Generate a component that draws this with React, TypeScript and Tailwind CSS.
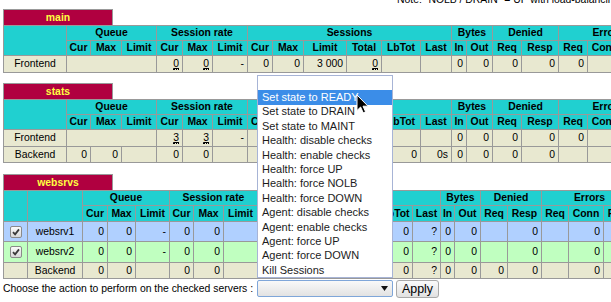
import React from "react";

const BG_FE = "bg-[#e8e8d0]";
const BG_BK = "bg-[#b0d0ff]";
const BG_UP = "bg-[#c0ffc0]";

function Th({ children, span = "" }: { children?: React.ReactNode; span?: string }) {
  return (
    <div className={`flex items-center justify-center overflow-hidden whitespace-nowrap bg-[#20d0d0] font-bold ${span}`}>
      {children}
    </div>
  );
}

function Td({
  children,
  bg,
  center = false,
  span = "",
}: {
  children?: React.ReactNode;
  bg: string;
  center?: boolean;
  span?: string;
}) {
  return (
    <div
      className={`flex items-center overflow-hidden whitespace-nowrap ${
        center ? "justify-center" : "justify-end pr-[3px]"
      } ${bg} ${span}`}
    >
      {children}
    </div>
  );
}

function U({ children }: { children: React.ReactNode }) {
  return (
    <span className="border-b border-dotted border-black leading-[11px] underline decoration-1 underline-offset-[1px]">
      {children}
    </span>
  );
}

function Title({ children }: { children: React.ReactNode }) {
  return (
    <div className="ml-[3px] flex h-[16px] w-[110px] items-center justify-center border border-b-0 border-[#999] bg-[#b00040] font-bold text-[#ffff40]">
      {children}
    </div>
  );
}

function Check() {
  return (
    <div className="flex h-[12px] w-[12px] items-center justify-center rounded-[2px] border border-[#8a8a8a] bg-gradient-to-b from-[#fbfbfb] to-[#d8d8d8]">
      <svg width="10" height="10" viewBox="0 0 10 10">
        <path d="M2 5.2 L4.1 7.4 L8 2.4" fill="none" stroke="#3a3a3a" strokeWidth="1.8" />
      </svg>
    </div>
  );
}

function HeaderRow2() {
  const labels = ["Cur", "Max", "Limit", "Cur", "Max", "Limit", "Cur", "Max", "Limit", "Total", "LbTot", "Last", "In", "Out", "Req", "Resp", "Req", "Conn", "Resp", "Retr", "Redis"];
  return (
    <>
      {labels.map((l, i) => (
        <Th key={i}>{l}</Th>
      ))}
    </>
  );
}

function Vals({ vals, bg }: { vals: React.ReactNode[]; bg: string }) {
  return (
    <>
      {vals.map((v, i) => (
        <Td key={i} bg={bg}>
          {v}
        </Td>
      ))}
    </>
  );
}

const menuItems = [
  "",
  "Set state to READY",
  "Set state to DRAIN",
  "Set state to MAINT",
  "Health: disable checks",
  "Health: enable checks",
  "Health: force UP",
  "Health: force NOLB",
  "Health: force DOWN",
  "Agent: disable checks",
  "Agent: enable checks",
  "Agent: force UP",
  "Agent: force DOWN",
  "Kill Sessions",
];

export default function App() {
  return (
    <div className="relative h-[302px] w-[611px] overflow-hidden bg-white font-['Liberation_Sans',Arial,sans-serif] text-[10.4px] leading-[12px] text-black">
      {/* note */}
      <div className="h-[9px] overflow-hidden">
        <div className="ml-[397px] -mt-[6px] whitespace-nowrap leading-[12px]">
          Note: "NOLB / DRAIN" = UP with load-balancing disabled.
        </div>
      </div>

      {/* main */}
      <Title>main</Title>
      <div className="ml-[3px] grid w-max grid-cols-[62px_23px_30px_34px_25px_29px_34px_24px_30px_42px_34px_38px_30px_14px_25px_28px_36px_28px_34px_34px_30px_30px] grid-rows-[14px_14px_16px] gap-px bg-[#999] p-px">
        <Th span="row-span-2" />
        <Th span="col-span-3">Queue</Th>
        <Th span="col-span-3">Session rate</Th>
        <Th span="col-span-6">Sessions</Th>
        <Th span="col-span-2">Bytes</Th>
        <Th span="col-span-2">Denied</Th>
        <Th span="col-span-3">Errors</Th>
        <Th span="col-span-2">Warnings</Th>
        <HeaderRow2 />
        <Td bg={BG_FE} center>
          Frontend
        </Td>
        <Td bg={BG_FE} span="col-span-3" />
        <Vals
          bg={BG_FE}
          vals={[<U>0</U>, <U>0</U>, "-", "0", "0", "3 000", <U>0</U>, "", "", "0", "0", "0", "0", "0", "", "", "", ""]}
        />
      </div>

      {/* stats */}
      <div className="mt-[10px]">
        <Title>stats</Title>
      </div>
      <div className="ml-[3px] grid w-max grid-cols-[62px_23px_30px_34px_25px_29px_34px_24px_30px_42px_34px_38px_30px_14px_25px_28px_36px_28px_34px_34px_30px_30px] grid-rows-[14px_14px_16px_15px] gap-px bg-[#999] p-px">
        <Th span="row-span-2" />
        <Th span="col-span-3">Queue</Th>
        <Th span="col-span-3">Session rate</Th>
        <Th span="col-span-6">Sessions</Th>
        <Th span="col-span-2">Bytes</Th>
        <Th span="col-span-2">Denied</Th>
        <Th span="col-span-3">Errors</Th>
        <Th span="col-span-2">Warnings</Th>
        <HeaderRow2 />
        <Td bg={BG_FE} center>
          Frontend
        </Td>
        <Td bg={BG_FE} span="col-span-3" />
        <Vals
          bg={BG_FE}
          vals={[<U>3</U>, <U>3</U>, "-", "1", "1", "3 000", <U>3</U>, "", "", "0", "0", "0", "0", "0", "", "", "", ""]}
        />
        <Td bg={BG_FE} center>
          Backend
        </Td>
        <Vals
          bg={BG_FE}
          vals={["0", "0", "", "0", "0", "", "0", "0", "300", "0", "0", "0s", "0", "0", "0", "0", "", "0", "0", "0", "0"]}
        />
      </div>

      {/* websrvs */}
      <div className="mt-[11px]">
        <Title>websrvs</Title>
      </div>
      <div className="ml-[3px] grid w-max grid-cols-[23px_54px_24px_27px_33px_23px_29px_33px_24px_27px_33px_33px_33px_27px_13px_25px_26px_33px_26px_34px_33px_30px_30px] grid-rows-[14px_15px_19px_20px_15px] gap-px bg-[#999] p-px">
        <Th span="row-span-2" />
        <Th span="row-span-2" />
        <Th span="col-span-3">Queue</Th>
        <Th span="col-span-3">Session rate</Th>
        <Th span="col-span-6">Sessions</Th>
        <Th span="col-span-2">Bytes</Th>
        <Th span="col-span-2">Denied</Th>
        <Th span="col-span-3">Errors</Th>
        <Th span="col-span-2">Warnings</Th>
        <HeaderRow2 />

        <Td bg={BG_BK} center>
          <Check />
        </Td>
        <Td bg={BG_BK} center>
          websrv1
        </Td>
        <Vals
          bg={BG_BK}
          vals={["0", "0", "-", "0", "0", "", "0", "0", "-", "0", "0", "?", "0", "0", "", "0", "", "0", "0", "0", "0"]}
        />

        <Td bg={BG_UP} center>
          <Check />
        </Td>
        <Td bg={BG_UP} center>
          websrv2
        </Td>
        <Vals
          bg={BG_UP}
          vals={["0", "0", "-", "0", "0", "", "0", "0", "-", "0", "0", "?", "0", "0", "", "0", "", "0", "0", "0", "0"]}
        />

        <Td bg={BG_FE} />
        <Td bg={BG_FE} center>
          Backend
        </Td>
        <Vals
          bg={BG_FE}
          vals={["0", "0", "", "0", "0", "", "0", "0", "300", "0", "0", "?", "0", "0", "0", "0", "", "0", "0", "0", "0"]}
        />
      </div>

      {/* action row */}
      <div className="ml-[3px] flex h-[19px] items-center">
        <span className="w-[254px] whitespace-nowrap">Choose the action to perform on the checked servers :</span>
        <div className="relative h-[17px] w-[136px] rounded-[2px] border border-[#7fa6d9] bg-gradient-to-b from-[#f9f9f9] to-[#e2e2e2]">
          <svg className="absolute right-[4px] top-[5px]" width="7" height="5" viewBox="0 0 7 5">
            <path d="M0 0 L7 0 L3.5 5 Z" fill="#111" />
          </svg>
        </div>
        <button className="ml-[3px] flex h-[18px] w-[43px] items-center justify-center rounded-[3px] border border-[#a9a9a9] bg-gradient-to-b from-[#fbfbfb] to-[#e1e1e1] text-[12.4px] leading-[14px] text-black">
          Apply
        </button>
      </div>

      {/* open dropdown list */}
      <div className="absolute left-[257px] top-[75px] w-[136px] border border-[#a7b4d6] bg-white text-[11px] leading-[13px] text-[#1c1c1c]">
        {menuItems.map((m, i) => (
          <div
            key={i}
            className={`flex h-[14.4px] items-center whitespace-nowrap pl-[4px] ${
              i === 1 ? "bg-[#3b8de8] text-white" : ""
            }`}
          >
            {m}
          </div>
        ))}
      </div>

      {/* mouse cursor */}
      <svg className="absolute left-[356px] top-[94px]" width="13" height="20" viewBox="0 0 13 20">
        <path d="M1 1 L1 16.5 L4.6 13 L7.2 18.8 L9.6 17.8 L7 12.2 L12 12.2 Z" fill="#000" stroke="#fff" strokeWidth="1" />
      </svg>
    </div>
  );
}
